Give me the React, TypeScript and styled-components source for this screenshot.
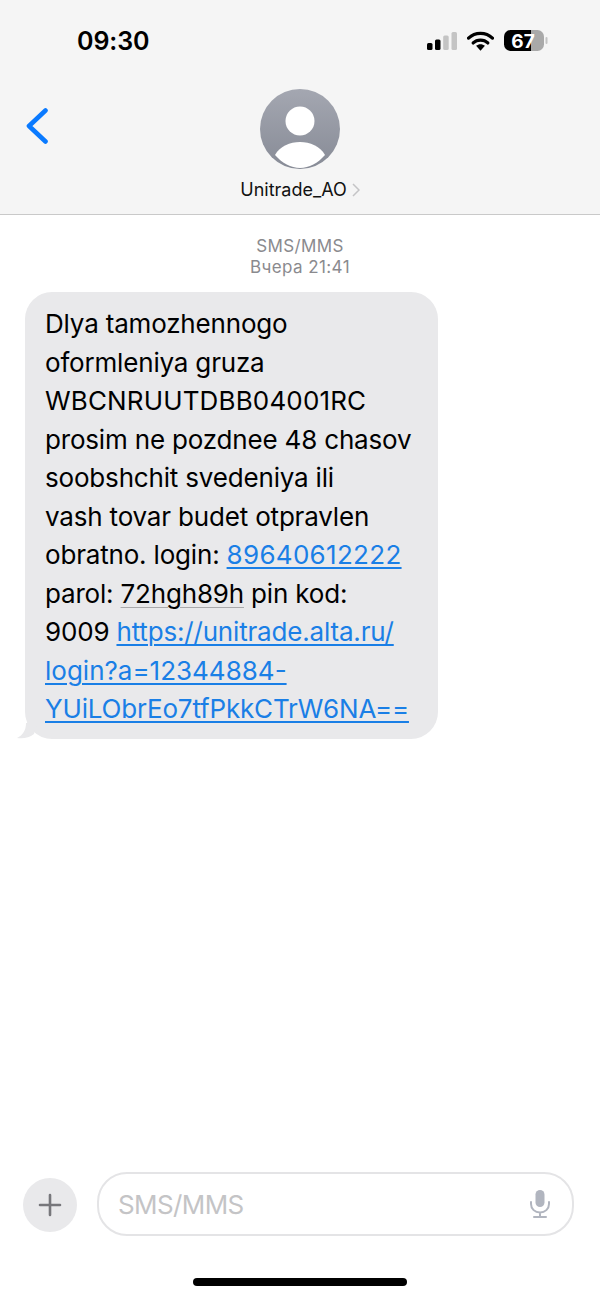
import React from 'react';
import styled, { createGlobalStyle } from 'styled-components';

const GlobalStyle = createGlobalStyle`
  html, body {
    margin: 0;
    padding: 0;
    background: #fff;
  }
  body {
    font-family: Inter, "Liberation Sans", sans-serif;
  }
`;

const Screen = styled.div`
  width: 600px;
  height: 1298px;
  display: flex;
  flex-direction: column;
  background: #fff;
  overflow: hidden;
`;

const Header = styled.header`
  height: 214px;
  flex: none;
  background: #f5f5f5;
  border-bottom: 1px solid #c9c9c9;
`;

const StatusBar = styled.div`
  height: 81px;
  padding: 0 52px 0 77px;
  display: flex;
  align-items: center;
  justify-content: space-between;
  box-sizing: border-box;
`;

const Clock = styled.span`
  font-size: 25px;
  font-weight: 600;
  color: #000;
  letter-spacing: -0.1px;
`;

const StatusIcons = styled.div`
  display: flex;
  align-items: center;
  gap: 10px;
`;

const Nav = styled.div`
  height: 133px;
  display: flex;
  align-items: flex-start;
  position: relative;
`;

const BackButton = styled.div`
  position: absolute;
  left: 25px;
  top: 27px;
  line-height: 0;
`;

const Contact = styled.div`
  flex: 1;
  display: flex;
  flex-direction: column;
  align-items: center;
  padding-top: 8px;
`;

const ContactName = styled.div`
  margin-top: 10px;
  display: flex;
  align-items: center;
  gap: 5px;
  font-size: 18px;
  line-height: 22px;
  color: #111;
`;

const Thread = styled.main`
  flex: 1;
  padding: 0 25px;
`;

const Meta = styled.div`
  padding-top: 21px;
  text-align: center;
  font-size: 17px;
  line-height: 21px;
  letter-spacing: 0.4px;
  color: #8a8a8e;
`;

const Bubble = styled.div`
  position: relative;
  width: 373px;
  margin-top: 14px;
  padding: 13px 20px 10px 20px;
  background: #e9e9eb;
  border-radius: 27px;
  font-size: 26px;
  line-height: 38.5px;
  letter-spacing: -0.18px;
  color: #000;
`;

const BubbleTail = styled.svg`
  position: absolute;
  left: -8px;
  bottom: 0;
`;

const Line = styled.span`
  display: block;
  white-space: nowrap;
`;

// caps and digits run a little wider in the reference than the rest of the text
const Wide = styled.span<{ $spacing: number }>`
  letter-spacing: ${(p) => p.$spacing}px;
`;

const MessageLink = styled.span`
  color: #1a7fe6;
  text-decoration: underline;
  text-decoration-thickness: 2px;
  text-underline-offset: 3px;
`;

const Detected = styled.span`
  text-decoration: underline;
  text-decoration-color: #a9a9ab;
  text-decoration-thickness: 1px;
  text-underline-offset: 4px;
`;

const Composer = styled.footer`
  flex: none;
  padding: 0 26px 0 23px;
  display: flex;
  align-items: center;
  gap: 20px;
`;

const PlusButton = styled.div`
  width: 54px;
  height: 54px;
  flex: none;
  margin-top: 1px;
  border-radius: 50%;
  background: #e9e9eb;
  display: flex;
  align-items: center;
  justify-content: center;
`;

const InputBox = styled.div`
  flex: 1;
  height: 64px;
  box-sizing: border-box;
  padding: 0 22px 0 19px;
  border: 2px solid #e4e4e6;
  border-radius: 30px;
  display: flex;
  align-items: center;
  justify-content: space-between;
`;

const Placeholder = styled.span`
  font-size: 26px;
  letter-spacing: -0.6px;
  color: #c4c4c6;
`;

const HomeArea = styled.div`
  flex: none;
  height: 62px;
  display: flex;
  justify-content: center;
  align-items: flex-start;
`;

const HomeIndicator = styled.div`
  margin-top: 42px;
  width: 214px;
  height: 8px;
  border-radius: 4px;
  background: #000;
`;

export default function App() {
  return (
    <Screen>
      <GlobalStyle />
      <Header>
        <StatusBar>
          <Clock>09:30</Clock>
          <StatusIcons>
            <svg width="30" height="18" viewBox="0 0 30 18">
              <rect x="0" y="11" width="5.5" height="7" rx="1.5" fill="#000" />
              <rect x="8" y="7.5" width="5.5" height="10.5" rx="1.5" fill="#000" />
              <rect x="16.2" y="3.5" width="5.5" height="14.5" rx="1.5" fill="#c4c4c4" />
              <rect x="24.5" y="0" width="5.5" height="18" rx="1.5" fill="#c4c4c4" />
            </svg>
            <svg width="27" height="20" viewBox="0 0 28 20">
              <path d="M1.6 7 C8.5 0.5 19.5 0.5 26.4 7" fill="none" stroke="#000" strokeWidth="3.4" strokeLinecap="round" />
              <path d="M6.4 12 C10.5 8 17.5 8 21.6 12" fill="none" stroke="#000" strokeWidth="3.4" strokeLinecap="round" />
              <path d="M14 20 L9.4 15 C12 12.8 16 12.8 18.6 15 Z" fill="#000" />
            </svg>
            <svg width="44" height="21" viewBox="0 0 44 21">
              <defs>
                <clipPath id="battery-body">
                  <rect x="0" y="0" width="40" height="21" rx="6.5" />
                </clipPath>
              </defs>
              <g clipPath="url(#battery-body)">
                <rect x="0" y="0" width="27" height="21" fill="#000" />
                <rect x="27" y="0" width="13" height="21" fill="#a9a9a9" />
              </g>
              <rect x="41.5" y="7" width="2" height="7" rx="1" fill="#c4c4c4" />
              <text x="19" y="17.5" textAnchor="middle" fontFamily="Inter, sans-serif" fontSize="19" fontWeight="700" fill="#fff">67</text>
            </svg>
          </StatusIcons>
        </StatusBar>
        <Nav>
          <BackButton>
            <svg width="24" height="36" viewBox="0 0 24 36">
              <path d="M20.5 2.5 L4 18 L20.5 33.5" fill="none" stroke="#0a7aff" strokeWidth="4.6" strokeLinecap="round" strokeLinejoin="round" />
            </svg>
          </BackButton>
          <Contact>
            <svg width="80" height="80" viewBox="0 0 80 80">
              <defs>
                <linearGradient id="avatar-fill" x1="0" y1="0" x2="0" y2="1">
                  <stop offset="0" stopColor="#a4a7b1" />
                  <stop offset="1" stopColor="#878b96" />
                </linearGradient>
              </defs>
              <circle cx="40" cy="40" r="40" fill="url(#avatar-fill)" />
              <circle cx="40" cy="32" r="14.5" fill="#fff" />
              <path d="M15 66 C20 57 30 53 40 53 C50 53 60 57 65 66 C58 74 49 79 40 79 C31 79 22 74 15 66 Z" fill="#fff" />
            </svg>
            <ContactName>
              Unitrade_AO
              <svg width="8" height="14" viewBox="0 0 8 14">
                <path d="M1 1 L7 7 L1 13" fill="none" stroke="#c4c4c6" strokeWidth="1.5" />
              </svg>
            </ContactName>
          </Contact>
        </Nav>
      </Header>
      <Thread>
        <Meta>
          SMS/MMS
          <br />
          Вчера 21:41
        </Meta>
        <Bubble>
          <BubbleTail width="20" height="16" viewBox="0 0 20 16">
            <path d="M9 0 C9 7 6 12 0 15 C6 16 12 15 17 11 L20 0 Z" fill="#e9e9eb" />
          </BubbleTail>
          <Line>Dlya tamozhennogo</Line>
          <Line>oformleniya gruza</Line>
          <Line>
            <Wide $spacing={0.15}>WBCNRUUTDBB04001RC</Wide>
          </Line>
          <Line>prosim ne pozdnee 48 chasov</Line>
          <Line>soobshchit svedeniya ili</Line>
          <Line>vash tovar budet otpravlen</Line>
          <Line>
            obratno. login:{' '}
            <MessageLink>
              <Wide $spacing={0.3}>89640612222</Wide>
            </MessageLink>
          </Line>
          <Line>
            parol: <Detected>72hgh89h</Detected> pin kod:
          </Line>
          <Line>
            9009 <MessageLink>https://unitrade.alta.ru/</MessageLink>
          </Line>
          <Line>
            <MessageLink>
              <Wide $spacing={0}>login?a=12344884-</Wide>
            </MessageLink>
          </Line>
          <Line>
            <MessageLink>YUiLObrEo7tfPkkCTrW6NA==</MessageLink>
          </Line>
        </Bubble>
      </Thread>
      <Composer>
        <PlusButton>
          <svg width="24" height="24" viewBox="0 0 24 24">
            <path d="M12 2 V22 M2 12 H22" stroke="#77777b" strokeWidth="2.6" strokeLinecap="round" />
          </svg>
        </PlusButton>
        <InputBox>
          <Placeholder>SMS/MMS</Placeholder>
          <svg width="20" height="28" viewBox="0 0 20 28">
            <rect x="5.5" y="0" width="9" height="17" rx="4.5" fill="#b1b5bf" />
            <path d="M1 12 V14 C1 19 5 22.5 10 22.5 C15 22.5 19 19 19 14 V12 M10 22.5 V27 M4 27 H16" fill="none" stroke="#b1b5bf" strokeWidth="2" strokeLinecap="round" />
          </svg>
        </InputBox>
      </Composer>
      <HomeArea>
        <HomeIndicator />
      </HomeArea>
    </Screen>
  );
}
